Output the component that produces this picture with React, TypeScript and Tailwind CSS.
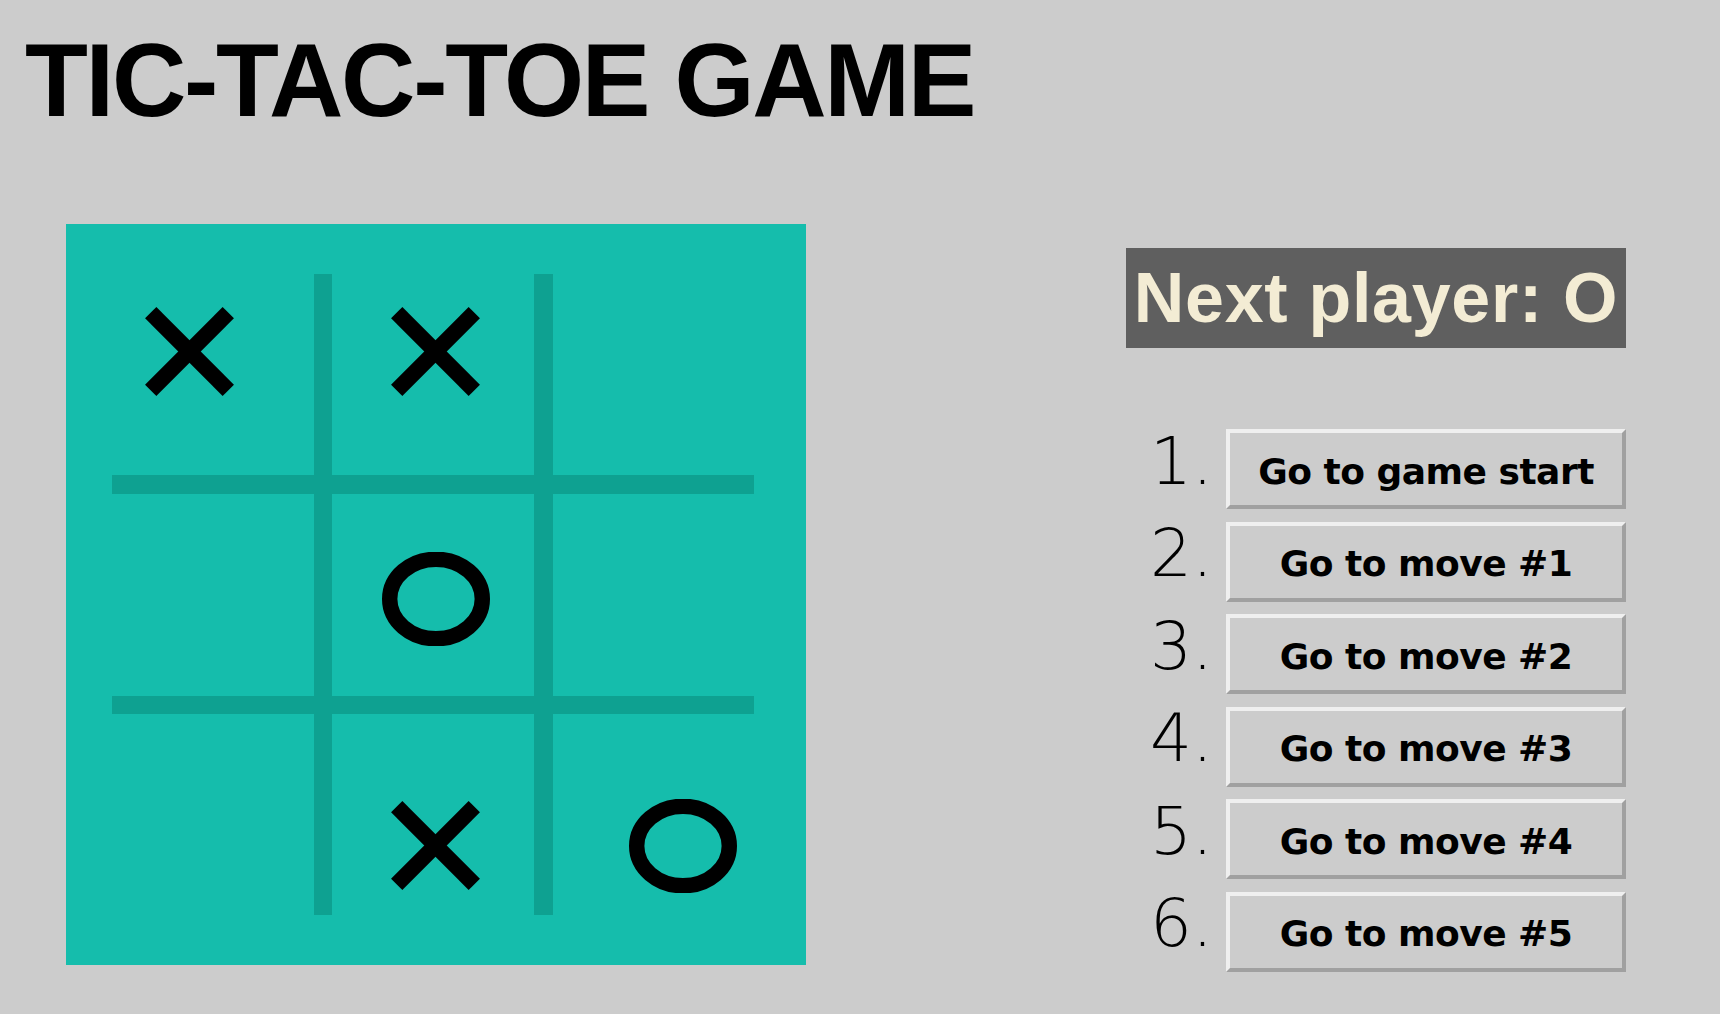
import React from 'react';

type Mark = 'X' | 'O' | null;

const squares: Mark[] = ['X', 'X', null, null, 'O', null, null, 'X', 'O'];

const moves = ['Go to game start', 'Go to move #1', 'Go to move #2', 'Go to move #3', 'Go to move #4', 'Go to move #5'];

function Cross() {
  return (
    <svg width="89" height="89" viewBox="0 0 89 89">
      <line x1="5.7" y1="5.7" x2="83.3" y2="83.3" stroke="#000" strokeWidth="16" />
      <line x1="83.3" y1="5.7" x2="5.7" y2="83.3" stroke="#000" strokeWidth="16" />
    </svg>
  );
}

function Nought() {
  return (
    <svg width="108" height="94" viewBox="0 0 108 94">
      <ellipse cx="54" cy="47" rx="46.3" ry="39.7" fill="none" stroke="#000" strokeWidth="15.4" />
    </svg>
  );
}

function Board() {
  return (
    <div className="relative grid h-[741px] w-[740px] shrink-0 grid-cols-3 grid-rows-3 bg-[#15bdac]">
      <div className="absolute left-[248px] top-[50px] h-[641px] w-[18px] bg-[#0ea191]" />
      <div className="absolute left-[468px] top-[50px] h-[641px] w-[19px] bg-[#0ea191]" />
      <div className="absolute left-[46px] top-[251px] h-[19px] w-[642px] bg-[#0ea191]" />
      <div className="absolute left-[46px] top-[472px] h-[18px] w-[642px] bg-[#0ea191]" />
      {squares.map((s, i) => (
        <div key={i} className="relative flex items-center justify-center pt-[8px]">
          {s === 'X' && <Cross />}
          {s === 'O' && <Nought />}
        </div>
      ))}
    </div>
  );
}

export default function App() {
  return (
    <div className="min-h-screen bg-[#cccccc] font-['Liberation_Sans',Arial,sans-serif] text-black">
      <h1 className="pl-[25px] pt-[29px] text-[103px] font-bold leading-none tracking-[-2.3px]">TIC-TAC-TOE GAME</h1>

      <div className="mt-[92px] flex items-start pl-[66px] pr-[94px]">
        <Board />

        <div className="ml-auto mt-[24px] flex w-[500px] flex-col">
          <div className="flex h-[100px] items-center justify-center bg-[#5f5f5f] text-[70px] font-bold leading-none tracking-[0.7px] text-[#f3ecd4]">
            Next player: O
          </div>

          <ol className="mt-[81px] flex flex-col gap-[12.5px]">
            {moves.map((m, i) => (
              <li key={i} className="flex items-baseline justify-end">
                <span className="w-[80px] text-right font-['DejaVu_Sans',sans-serif] text-[66px] font-extralight leading-[50px]">
                  {i + 1}.
                </span>
                <button className="ml-[13px] h-[80px] w-[400px] border-4 border-t-[#efefef] border-l-[#efefef] border-r-[#a0a0a0] border-b-[#a0a0a0] bg-[#cccccc] pt-[5px] font-['DejaVu_Sans',Verdana,sans-serif] text-[36px] font-bold tracking-[-0.5px] text-black">
                  {m}
                </button>
              </li>
            ))}
          </ol>
        </div>
      </div>
    </div>
  );
}
